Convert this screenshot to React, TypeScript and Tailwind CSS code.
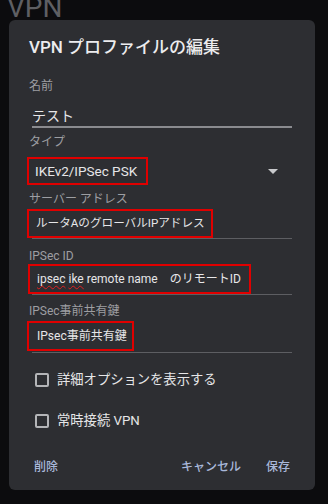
import React from "react";

const font = { fontFamily: "Roboto, 'Noto Sans CJK JP', sans-serif" };

function Label({ children, className = "" }: { children: React.ReactNode; className?: string }) {
  return <div className={`text-[12px] leading-[16px] text-[#9d9ea2] ${className}`}>{children}</div>;
}

function Checkbox({ label, className = "" }: { label: string; className?: string }) {
  return (
    <div className={`flex items-center h-[24px] pl-[6px] gap-[8px] ${className}`}>
      <span className="w-[14px] h-[14px] border-2 border-[#b4b5b8] rounded-[2px]" />
      <span className="text-[13.3px] text-[#e6e6e8]">{label}</span>
    </div>
  );
}

export default function App() {
  return (
    <div className="relative w-[328px] h-[504px] bg-[#0c0c0e] overflow-hidden" style={font}>
      <div className="pl-[7px] -mt-[6px] text-[28px] leading-[28px] text-[#5e5f63]">VPN</div>

      {/* modal dialog */}
      <div className="absolute left-[9px] top-[20px] w-[306px] h-[470px] rounded-[6px] bg-[#2d2e32] pt-[15px] pl-[20px] pr-[23px]">
        <div className="text-[17px] leading-[24px] text-[#ececee] font-medium">VPN プロファイルの編集</div>

        <Label className="mt-[19px]">名前</Label>
        <div className="ml-[3px] mt-[12px] h-[22px] text-[14px] leading-[20px] text-[#e6e6e8] border-b-2 border-[#8a8b8f]">
          テスト
        </div>

        <Label className="mt-[6px]">タイプ</Label>
        <div className="mt-[7px] flex items-center justify-between">
          <span className="-ml-[2px] inline-flex items-center h-[28px] border-2 border-[#e00000] pl-[6px] pr-[9px] text-[13.5px] text-[#e6e6e8]">
            IKEv2/IPSec PSK
          </span>
          <span className="mr-[14px] w-0 h-0 border-l-[5px] border-r-[5px] border-t-[5px] border-l-transparent border-r-transparent border-t-[#c8c9cc]" />
        </div>

        <Label className="mt-[6px]">サーバー アドレス</Label>
        <div className="mt-[2px] ml-[3px] border-b border-[#5d5e62]">
          <span className="-ml-[5px] inline-flex items-center h-[29px] border-2 border-[#e00000] pl-[7px] pr-[6px] text-[11.6px] text-[#e6e6e8]">
            ルータAのグローバルIPアドレス
          </span>
        </div>

        <Label className="mt-[9px]">IPSec ID</Label>
        <div className="ml-[3px] border-b border-[#5d5e62]">
          <span className="-ml-[4px] inline-flex items-center h-[30px] border-2 border-[#e00000] pl-[7px] pr-[8px] text-[12px] text-[#e6e6e8]">
            <span className="whitespace-pre">
              <span className="underline decoration-wavy decoration-[#e02020] decoration-1 underline-offset-2">ipsec</span>
              {" "}
              <span className="underline decoration-wavy decoration-[#e02020] decoration-1 underline-offset-2">ike</span>
              {" remote name　のリモートID"}
            </span>
          </span>
        </div>

        <Label className="mt-[8px]">IPSec事前共有鍵</Label>
        <div className="mt-[2px] ml-[3px] pb-[1px] border-b border-[#5d5e62]">
          <span className="-ml-[5px] inline-flex items-center h-[30px] border-2 border-[#e00000] pl-[8px] pr-[5px] text-[12px] text-[#e6e6e8]">
            IPsec事前共有鍵
          </span>
        </div>

        <Checkbox label="詳細オプションを表示する" className="mt-[15px]" />
        <Checkbox label="常時接続 VPN" className="mt-[17px]" />

        <div className="mt-[24px] flex items-center h-[20px] pl-[5px] pr-[2px] text-[12px] font-medium text-[#a9b8da]">
          <span>削除</span>
          <span className="ml-auto">キャンセル</span>
          <span className="ml-[25px]">保存</span>
        </div>
      </div>
    </div>
  );
}
